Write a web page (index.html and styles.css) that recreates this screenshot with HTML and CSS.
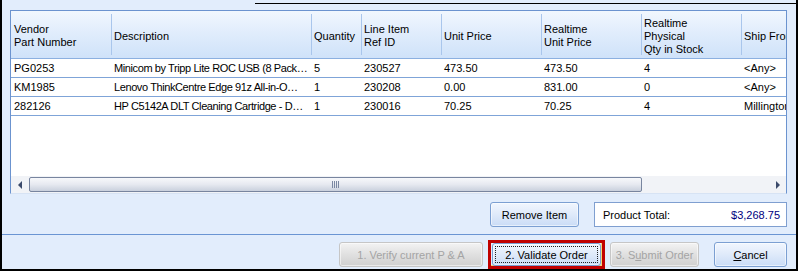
FILE: index.html
```html
<!DOCTYPE html>
<html lang="en">
<head>
  <meta charset="UTF-8" />
  <title>Validate Order</title>
  <link rel="stylesheet" href="styles.css">
</head>
<body>
  <div class="window">
    <div class="edge"></div>

    <!-- Order lines -->
    <div class="grid">
      <div class="view">
        <div class="row head">
          <div class="cell first">Vendor<br>Part Number</div>
          <div class="cell">Description</div>
          <div class="cell">Quantity</div>
          <div class="cell">Line Item<br>Ref ID</div>
          <div class="cell">Unit Price</div>
          <div class="cell">Realtime<br>Unit Price</div>
          <div class="cell">Realtime<br>Physical<br>Qty in Stock</div>
          <div class="cell">Ship From</div>
        </div>
        <div class="row">
          <div class="cell first">PG0253</div>
          <div class="cell desc">Minicom by Tripp Lite ROC USB (8 Pack…</div>
          <div class="cell">5</div>
          <div class="cell">230527</div>
          <div class="cell">473.50</div>
          <div class="cell">473.50</div>
          <div class="cell">4</div>
          <div class="cell">&lt;Any&gt;</div>
        </div>
        <div class="row">
          <div class="cell first">KM1985</div>
          <div class="cell desc">Lenovo ThinkCentre Edge 91z All-in-O…</div>
          <div class="cell">1</div>
          <div class="cell">230208</div>
          <div class="cell">0.00</div>
          <div class="cell">831.00</div>
          <div class="cell">0</div>
          <div class="cell">&lt;Any&gt;</div>
        </div>
        <div class="row">
          <div class="cell first">282126</div>
          <div class="cell desc">HP C5142A DLT Cleaning Cartridge - D…</div>
          <div class="cell">1</div>
          <div class="cell">230016</div>
          <div class="cell">70.25</div>
          <div class="cell">70.25</div>
          <div class="cell">4</div>
          <div class="cell">Millington</div>
        </div>
      </div>
      <div class="hscroll">
        <div class="arrow">
          <svg width="4" height="8" viewBox="0 0 4 8"><path d="M4 0V8L0 4Z" fill="#3b4a6b"/></svg>
        </div>
        <div class="track">
          <div class="thumb">
            <svg width="7" height="7" viewBox="0 0 7 7"><path d="M0.5 0v7M2.5 0v7M4.5 0v7M6.5 0v7" stroke="#7b88a2"/></svg>
          </div>
        </div>
        <div class="arrow">
          <svg width="4" height="8" viewBox="0 0 4 8"><path d="M0 0V8L4 4Z" fill="#3b4a6b"/></svg>
        </div>
      </div>
    </div>

    <div class="actions">
      <button class="btn remove">Remove Item</button>
      <div class="total">
        <span>Product Total:</span>
        <span class="amount">$3,268.75</span>
      </div>
    </div>

    <div class="sep"></div>

    <div class="footer">
      <button class="btn off verify" disabled>1. Verify current P &amp; A</button>
      <div class="highlight">
        <button class="btn validate">2. Validate Order</button>
      </div>
      <button class="btn off submit" disabled>3. S<u>u</u>bmit Order</button>
      <button class="btn cancel"><u>C</u>ancel</button>
    </div>
  </div>
</body>
</html>
```

FILE: styles.css
```css
body {
  margin: 0;
  font-family: 'Liberation Sans', Arial, sans-serif;
  font-size: 11px;
  color: #000;
  background: #e2edfc;
}

.window {
  height: 271px;
  box-sizing: border-box;
  border: 2px solid #000;
  border-top: 0;
  background: #e2edfc;
  display: flex;
  flex-direction: column;
}

.edge {
  height: 1px;
  margin: 3px 0 6px 253px;
  background: #000;
}

.grid {
  height: 184px;
  box-sizing: border-box;
  margin: 0 9px 0 8px;
  border: 1px solid #6b93cf;
  border-bottom-color: #d7e3f4;
  background: #fff;
  display: flex;
  flex-direction: column;
}

.view {
  flex: 1;
  overflow: hidden;
}

.row {
  display: grid;
  grid-template-columns: 101px 200px 50px 80px 100px 100px 100px 100px;
  width: max-content;
  height: 19px;
  box-sizing: border-box;
  border-bottom: 1px solid #7fa4d8;
}

.cell {
  padding-left: 2px;
  line-height: 18px;
  white-space: nowrap;
  overflow: hidden;
}

.cell.first {
  padding-left: 3px;
}

.cell.desc {
  letter-spacing: -0.4px;
}

.head {
  height: 48px;
  background: linear-gradient(#f1f7fe, #e1edfc 45%, #cfe2f9);
  border-bottom-color: #8cb0e0;
}

.head .cell {
  display: flex;
  align-items: center;
  padding-top: 3px;
  line-height: 13px;
  position: relative;
}

.head .cell::after {
  content: "";
  position: absolute;
  right: 0;
  top: 3px;
  bottom: 3px;
  width: 1px;
  background: #a9c6ec;
}

.hscroll {
  height: 17px;
  display: flex;
  background: #f1f3f7;
}

.arrow {
  width: 17px;
  display: flex;
  align-items: center;
  justify-content: center;
}

.track {
  flex: 1;
  padding: 1px 0 1px 1px;
}

.thumb {
  width: 613px;
  height: 15px;
  box-sizing: border-box;
  border: 1px solid #78859f;
  border-radius: 2px;
  background: linear-gradient(#f7f8fb, #e6e9f0 50%, #c9d0dd);
  display: flex;
  align-items: center;
  justify-content: center;
}

.actions {
  height: 25px;
  margin: 8px 9px 0 8px;
  display: flex;
  justify-content: flex-end;
  gap: 15px;
}

.btn {
  height: 25px;
  padding: 0;
  font-family: inherit;
  font-size: 11px;
  color: #000;
  border: 1px solid #7b9fd2;
  border-radius: 3px;
  background: linear-gradient(#f1f6fe, #dfeafa 50%, #cadcf6);
  box-shadow: inset 0 0 0 1px rgba(255, 255, 255, 0.55);
}

.remove { width: 89px; }

.total {
  width: 193px;
  box-sizing: border-box;
  border: 1px solid #7f9fd0;
  background: #fff;
  display: flex;
  align-items: center;
  justify-content: space-between;
  padding: 0 6px 0 8px;
}

.amount { color: #000080; }

.sep {
  height: 1px;
  margin-top: 7px;
  background: #6a95d3;
}

.footer {
  flex: 1;
  display: flex;
  justify-content: flex-end;
  align-items: flex-start;
  padding: 5px 9px 0 0;
}

.footer > .btn {
  margin-top: 2px;
}

.off {
  color: #a4a4a4;
  border-color: #c6c6c6;
  background: linear-gradient(#f3f3f3, #e0e0e0 50%, #d0d0d0);
}

.verify { width: 144px; }
.submit { width: 89px; margin-left: 5px; }
.cancel { width: 73px; margin-left: 15px; }

.highlight {
  margin-left: 5px;
  border: 3px solid #c00000;
  padding: 0 1px;
  box-shadow: inset -1px -1px 0 #efd67a;
}

.validate {
  width: 109px;
  height: 23px;
  position: relative;
  display: block;
}

.validate::after {
  content: "";
  position: absolute;
  inset: 2px;
  border: 1px dotted #222;
}
```
